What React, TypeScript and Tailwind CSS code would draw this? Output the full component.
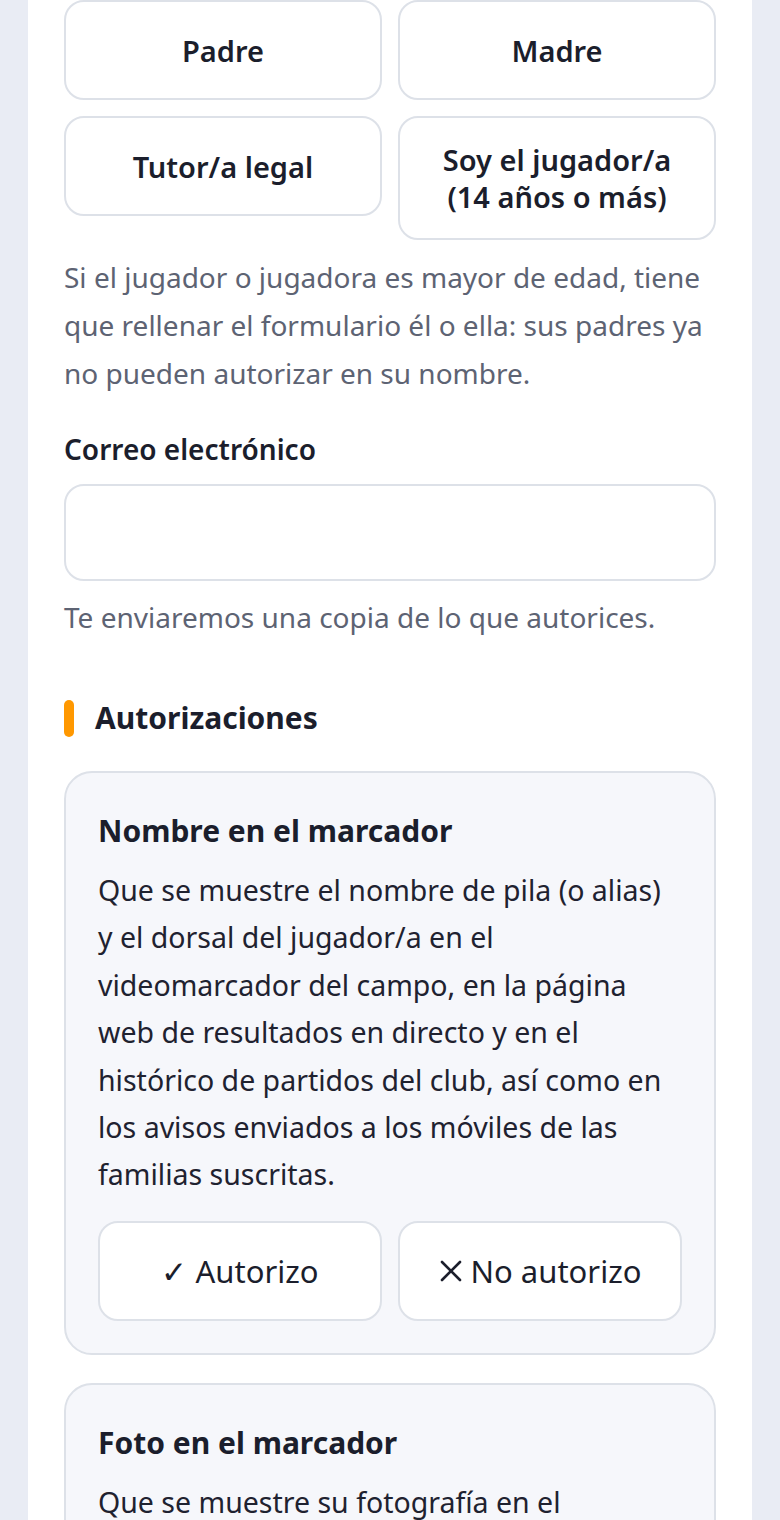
const font = { fontFamily: '"Noto Sans", "Open Sans", sans-serif' };

function Choice({ children }: { children: React.ReactNode }) {
  return (
    <button className="flex min-h-[100px] items-center justify-center rounded-[20px] border-2 border-[#dde1e8] bg-white px-4 py-[23px] text-center text-[29px] font-semibold leading-[37px] text-[#1b1e2c]">
      {children}
    </button>
  );
}

function AuthCard({ title, text }: { title: string; text: string }) {
  return (
    <div className="rounded-[28px] border-2 border-[#dde1e8] bg-[#f6f7fb] px-8 pt-[38px] pb-8">
      <h3 className="text-[30px] font-bold leading-[40px] text-[#1b1e2c]">{title}</h3>
      <p className="mt-[16px] text-[28.5px] leading-[47.4px] text-[#1f2230]">{text}</p>
      <div className="mt-[22px] grid grid-cols-2 gap-4">
        <button className="flex h-[100px] items-center justify-center rounded-[20px] border-2 border-[#dde1e8] bg-white text-[31px] text-[#1b1e2c]">
          ✓ Autorizo
        </button>
        <button className="flex h-[100px] items-center justify-center gap-[8px] rounded-[20px] border-2 border-[#dde1e8] bg-white text-[31px] text-[#1b1e2c]">
          <svg width="24" height="24" viewBox="0 0 24 24" fill="none" stroke="currentColor" strokeWidth="2.6" strokeLinecap="round">
            <path d="M3 3L21 21M21 3L3 21" />
          </svg>
          No autorizo
        </button>
      </div>
    </div>
  );
}

export default function App() {
  return (
    <div className="h-[1520px] overflow-hidden bg-[#e9ecf4] px-7" style={font}>
      <div className="min-h-[1520px] bg-white px-9 pb-10">
        <div className="grid grid-cols-2 items-start gap-4">
          <Choice>Padre</Choice>
          <Choice>Madre</Choice>
          <Choice>Tutor/a legal</Choice>
          <Choice>
            Soy el jugador/a
            <br />
            (14 años o más)
          </Choice>
        </div>

        <p className="mt-[13px] text-[28px] leading-[48px] text-[#5d6373]">
          Si el jugador o jugadora es mayor de edad, tiene que rellenar el formulario él o ella: sus padres ya no pueden autorizar en su nombre.
        </p>

        <label className="mt-[34px] block text-[28px] font-semibold leading-[36px] text-[#1b1e2c]">
          Correo electrónico
        </label>
        <input
          type="email"
          className="mt-[17px] block h-[97px] w-full rounded-[20px] border-2 border-[#dde1e8] bg-white px-6 text-[28px] outline-none"
        />
        <p className="mt-[18px] text-[28px] leading-[36px] text-[#5d6373]">
          Te enviaremos una copia de lo que autorices.
        </p>

        <div className="mt-[63px] flex items-center gap-[21px]">
          <span className="h-[37px] w-[10px] rounded-full bg-[#ff9800]" />
          <h2 className="text-[30px] font-bold leading-[40px] text-[#1b1e2c]">Autorizaciones</h2>
        </div>

        <div className="mt-[33px] flex flex-col gap-[28px]">
          <AuthCard
            title="Nombre en el marcador"
            text="Que se muestre el nombre de pila (o alias) y el dorsal del jugador/a en el videomarcador del campo, en la página web de resultados en directo y en el histórico de partidos del club, así como en los avisos enviados a los móviles de las familias suscritas."
          />
          <AuthCard
            title="Foto en el marcador"
            text="Que se muestre su fotografía en el videomarcador del campo cuando marque un gol o sea elegido jugador/a del partido, y en la ficha del equipo publicada en la web del club."
          />
        </div>
      </div>
    </div>
  );
}
